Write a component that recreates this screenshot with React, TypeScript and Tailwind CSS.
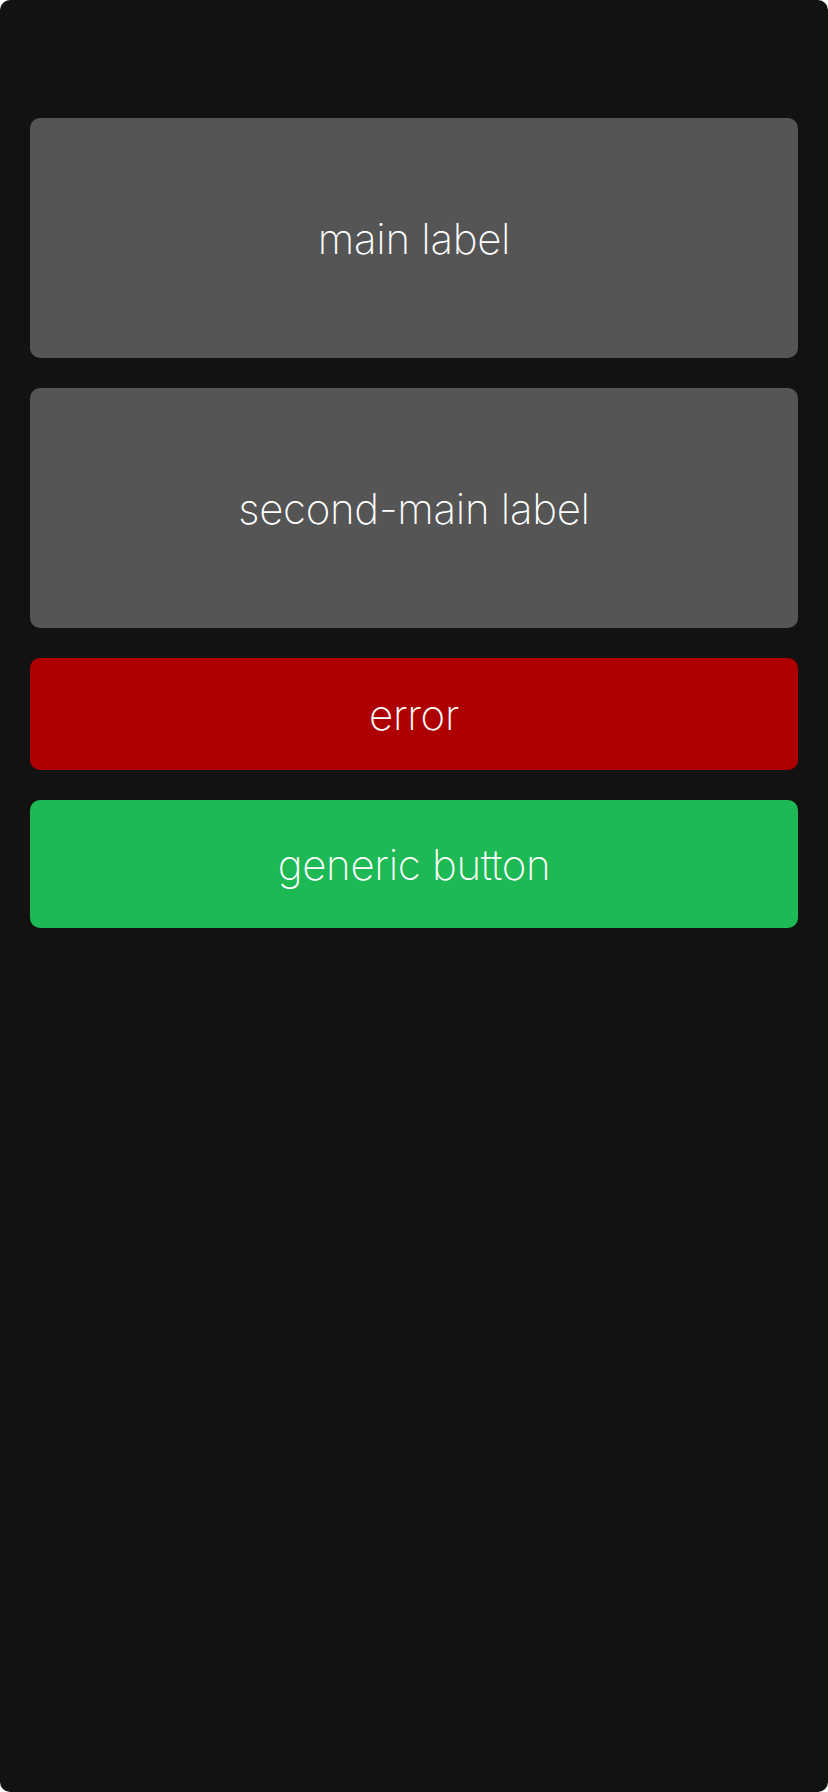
export default function App() {
  const font = { fontFamily: 'Inter, "Noto Sans", sans-serif' }
  return (
    <div className="min-h-[1792px] bg-white">
      <div
        style={font}
        className="flex h-[1792px] flex-col gap-[30px] rounded-[10px] bg-[#121212] px-[30px] pt-[118px]"
      >
        <button className="flex h-[240px] items-center justify-center rounded-[10px] bg-[#555555] text-[42px] font-extralight tracking-[-0.3px] text-white">
          main label
        </button>
        <button className="flex h-[240px] items-center justify-center rounded-[10px] bg-[#555555] text-[42px] font-extralight tracking-[-0.3px] text-white">
          second-main label
        </button>
        <button className="flex h-[112px] items-center justify-center rounded-[10px] bg-[#ae0000] text-[42px] font-extralight tracking-[-0.3px] text-white">
          error
        </button>
        <button className="flex h-[128px] items-center justify-center rounded-[10px] bg-[#1db954] text-[42px] font-extralight tracking-[-0.3px] text-white">
          generic button
        </button>
      </div>
    </div>
  )
}
